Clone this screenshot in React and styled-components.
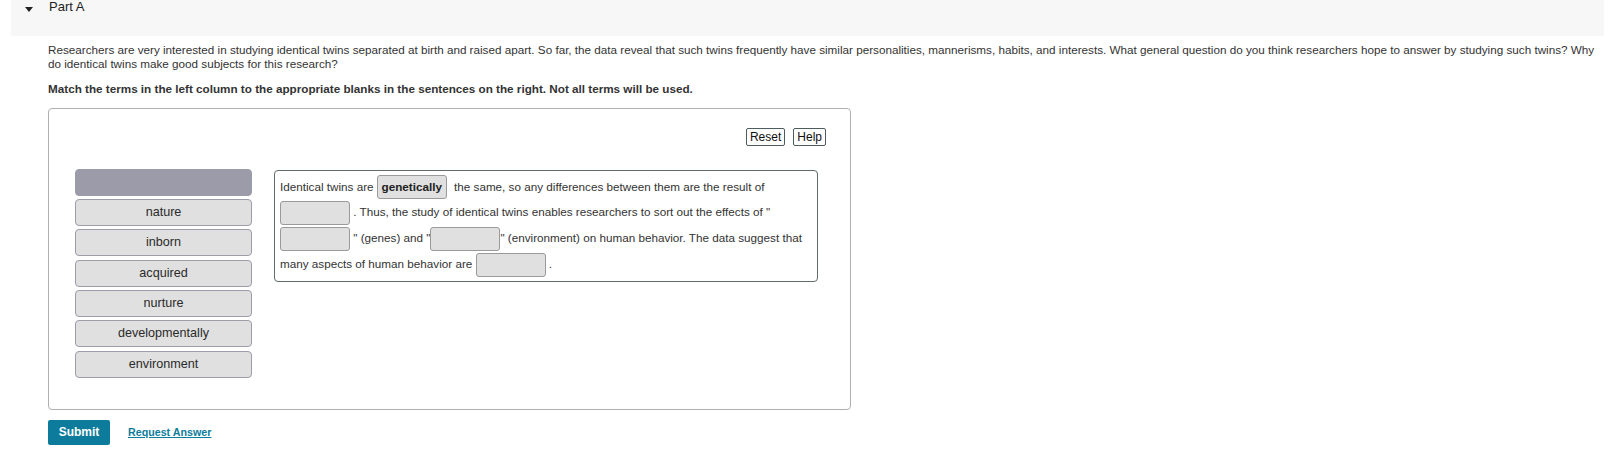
import React from 'react';
import styled, { createGlobalStyle } from 'styled-components';

const colors = {
    text: '#333333',
    headerBg: '#f7f7f7',
    boxBorder: '#b0b0b0',
    tile: '#e0e0e0',
    tileBorder: '#9d9cab',
    tileDark: '#9c9ba9',
    sentenceBorder: '#5f6b6b',
    blankBorder: '#9a9a9a',
    teal: '#0d7c9c',
};

const terms = ['nature', 'inborn', 'acquired', 'nurture', 'developmentally', 'environment'];

const GlobalStyle = createGlobalStyle`
    body {
        margin: 0;
        background: #ffffff;
        font-family: "Liberation Sans", Arial, sans-serif;
        color: ${colors.text};
    }
`;

const App = () => (
    <Page>
        <GlobalStyle />
        <PartHeader>
            <Caret />
            <PartTitle>Part A</PartTitle>
        </PartHeader>
        <Content>
            <Prompt>
                Researchers are very interested in studying identical twins separated at birth and raised apart. So far, the
                data reveal that such twins frequently have similar personalities, mannerisms, habits, and interests. What
                general question do you think researchers hope to answer by studying such twins? Why do identical twins make
                good subjects for this research?
            </Prompt>
            <Instructions>
                Match the terms in the left column to the appropriate blanks in the sentences on the right. Not all terms will be used.
            </Instructions>
            <Workspace>
                <ToolRow>
                    <ToolButton>Reset</ToolButton>
                    <ToolButton>Help</ToolButton>
                </ToolRow>
                <MatchArea>
                    <TermList>
                        <Term $empty />
                        {terms.map((t) => (
                            <Term key={t}>{t}</Term>
                        ))}
                    </TermList>
                    <Sentences>
                        Identical twins are <Blank $filled>genetically</Blank> the same, so any differences between them are the result of
                        <br />
                        <Blank /> . Thus, the study of identical twins enables researchers to sort out the effects of "
                        <br />
                        <Blank /> " (genes) and "<Blank />" (environment) on human behavior. The data suggest that
                        <br />
                        many aspects of human behavior are <Blank /> .
                    </Sentences>
                </MatchArea>
            </Workspace>
            <Actions>
                <SubmitButton>Submit</SubmitButton>
                <RequestLink href="#">Request Answer</RequestLink>
            </Actions>
        </Content>
    </Page>
);

const Page = styled.div`
    padding: 0 14px 0 11px;
`;

const PartHeader = styled.div`
    display: flex;
    align-items: flex-start;
    height: 36px;
    background: ${colors.headerBg};
    padding-left: 14px;
`;

const Caret = styled.span`
    width: 0;
    height: 0;
    margin-top: 7px;
    border-left: 4.5px solid transparent;
    border-right: 4.5px solid transparent;
    border-top: 5px solid #222;
`;

const PartTitle = styled.span`
    margin-left: 16px;
    font-size: 13px;
    line-height: 13px;
    color: #222;
`;

const Content = styled.div`
    padding-left: 37px;
`;

const Prompt = styled.p`
    margin: 7px 0 0;
    font-size: 11.7px;
    line-height: 13.5px;
`;

const Instructions = styled.p`
    margin: 12px 0 0;
    font-size: 11.7px;
    line-height: 13.5px;
    font-weight: bold;
`;

const Workspace = styled.div`
    box-sizing: border-box;
    width: 803px;
    height: 302px;
    margin-top: 12px;
    padding: 19px 24px 0 26px;
    border: 1px solid ${colors.boxBorder};
    border-radius: 4px;
`;

const ToolRow = styled.div`
    display: flex;
    justify-content: flex-end;
    gap: 8px;
`;

const ToolButton = styled.button`
    box-sizing: border-box;
    height: 18px;
    padding: 0 3px;
    background: #fff;
    border: 1px solid #4d5c5c;
    border-radius: 2px;
    font-family: inherit;
    font-size: 12px;
    color: #111;
`;

const MatchArea = styled.div`
    display: flex;
    align-items: flex-start;
    gap: 22px;
    margin-top: 23px;
`;

const TermList = styled.div`
    display: flex;
    flex-direction: column;
    gap: 3.4px;
    width: 177px;
`;

const Term = styled.div`
    box-sizing: border-box;
    height: 27px;
    line-height: 25px;
    text-align: center;
    font-size: 12.6px;
    color: #2a2a2a;
    background: ${(p) => (p.$empty ? colors.tileDark : colors.tile)};
    border: 1px solid ${colors.tileBorder};
    border-radius: 4px;
`;

const Sentences = styled.div`
    box-sizing: border-box;
    width: 544px;
    margin-top: 1px;
    padding: 3px 5px 4px;
    border: 1px solid ${colors.sentenceBorder};
    border-radius: 4px;
    font-size: 11.7px;
    line-height: 25px;
    color: ${colors.text};
`;

const Blank = styled.span`
    display: inline-block;
    box-sizing: border-box;
    width: 70px;
    height: 24px;
    line-height: 22px;
    vertical-align: middle;
    margin-right: ${(p) => (p.$filled ? '4px' : '0')};
    text-align: center;
    font-weight: bold;
    color: #222;
    background: ${colors.tile};
    border: 1px solid ${colors.blankBorder};
    border-radius: 3px;
`;

const Actions = styled.div`
    display: flex;
    align-items: center;
    gap: 18px;
    margin-top: 10px;
`;

const SubmitButton = styled.button`
    width: 62px;
    height: 25px;
    padding: 0;
    background: ${colors.teal};
    border: none;
    border-radius: 2px;
    color: #fff;
    font-family: inherit;
    font-size: 12px;
    font-weight: bold;
`;

const RequestLink = styled.a`
    font-size: 10.7px;
    font-weight: bold;
    color: ${colors.teal};
    text-decoration: underline;
`;

export default App;
